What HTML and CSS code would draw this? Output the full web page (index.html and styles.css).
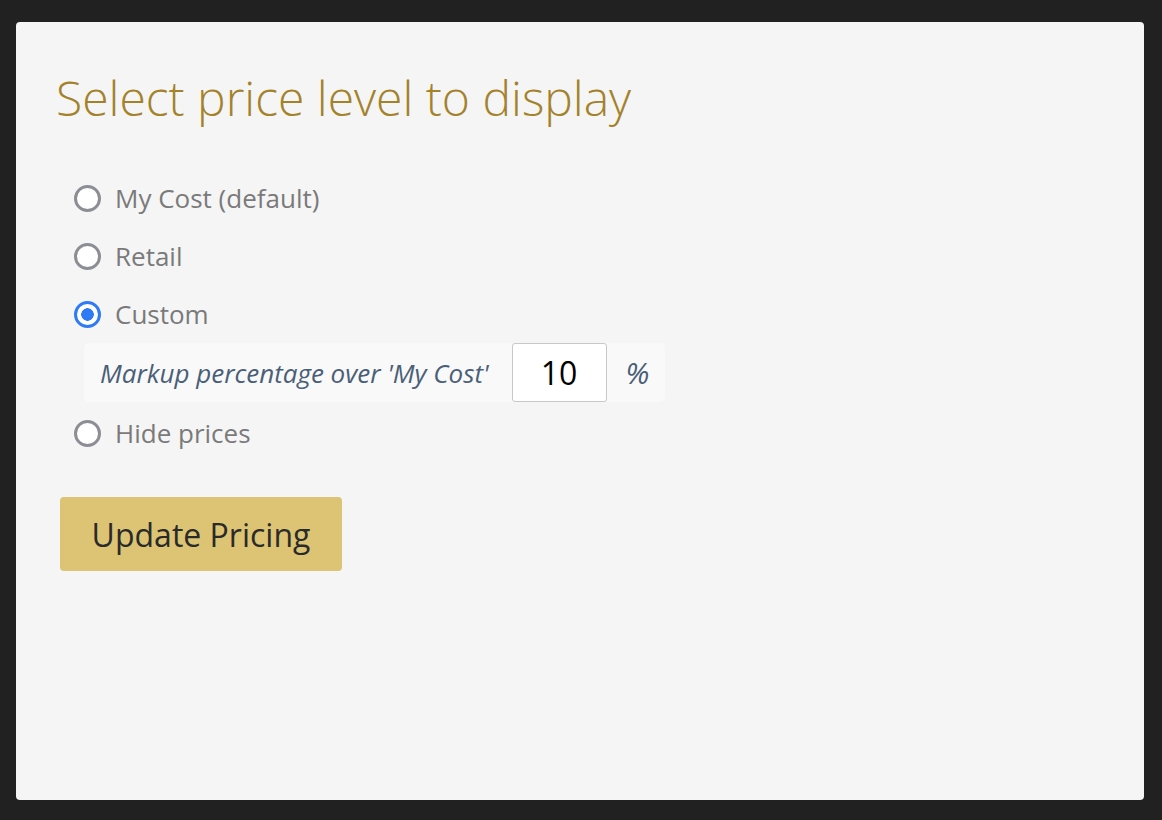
FILE: index.html
```html
<!DOCTYPE html>
<html>
<head>
<meta charset="utf-8">
<link rel="stylesheet" href="styles.css">
</head>
<body>
<div class="panel">
  <h1 class="title">Select price level to display</h1>
  <form class="options">
    <label class="opt"><input type="radio" name="lvl" class="radio"><span>My Cost (default)</span></label>
    <label class="opt"><input type="radio" name="lvl" class="radio"><span>Retail</span></label>
    <label class="opt"><input type="radio" name="lvl" class="radio" checked><span>Custom</span></label>
    <div class="markup">
      <span class="markup-label">Markup percentage over 'My Cost'</span>
      <input class="pct" type="text" value="10">
      <span class="markup-label pct-sign">%</span>
    </div>
    <label class="opt opt-after"><input type="radio" name="lvl" class="radio"><span>Hide prices</span></label>
  </form>
  <button class="btn" type="button">Update Pricing</button>
</div>
</body>
</html>
```

FILE: styles.css
```css
html, body {
  margin: 0;
  padding: 0;
  background: #212121;
  font-family: "Open Sans", "DejaVu Sans", sans-serif;
}
body {
  padding: 22px 18px 20px 16px;
}
.panel {
  background: #f5f5f5;
  border-radius: 4px;
  height: 778px;
  box-sizing: border-box;
  padding: 45px 40px 0 40px;
}
.title {
  margin: 0;
  font-weight: 300;
  font-size: 48px;
  line-height: 62px;
  color: #a3822a;
}
.options {
  margin: 40px 0 0 18px;
  display: flex;
  flex-direction: column;
  align-items: flex-start;
}
.opt {
  display: flex;
  align-items: center;
  height: 58px;
  font-size: 26px;
  color: #7a7a7a;
}
.opt-after {
  margin-top: 2px;
}
.radio {
  appearance: none;
  -webkit-appearance: none;
  margin: 0 14px 0 0;
  width: 27px;
  height: 27px;
  border-radius: 50%;
  border: 3px solid #8d8d96;
  background: #fff;
  box-sizing: border-box;
}
.radio:checked {
  border: 3.5px solid #2f7bf5;
  background: radial-gradient(circle, #2f7bf5 0 6px, #fff 6.5px);
}
.markup {
  display: flex;
  align-items: center;
  margin-left: 10px;
  background: #f9f9f9;
  border-radius: 5px;
  height: 59px;
  padding: 0 16px 0 16px;
}
.markup-label {
  font-style: italic;
  font-size: 26px;
  color: #4a5f78;
}
.pct {
  width: 95px;
  height: 59px;
  box-sizing: border-box;
  margin: 0 0 0 23px;
  border: 1px solid #c8c8c8;
  border-radius: 3px;
  background: #fff;
  text-align: center;
  font-family: "Open Sans", sans-serif;
  font-size: 32px;
  color: #000;
  padding: 0;
}
.pct-sign {
  margin-left: 19px;
  font-size: 30px;
}
.btn {
  margin: 35px 0 0 4px;
  width: 282px;
  height: 74px;
  border: none;
  border-radius: 4px;
  background: #dcc474;
  color: #2a2a2a;
  font-family: "Open Sans", sans-serif;
  font-size: 32px;
  padding: 0;
}
```
